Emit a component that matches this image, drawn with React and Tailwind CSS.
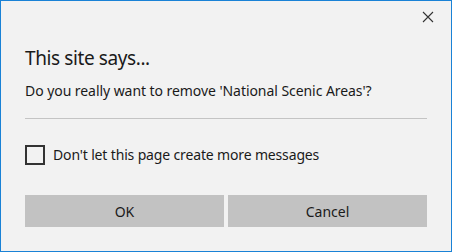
export default function App() {
  return (
    <div
      className="w-[452px] h-[252px] border border-[#1a82d6] bg-[#f2f2f2] flex flex-col text-[#1a1a1a]"
      style={{ fontFamily: '"Noto Sans", "Open Sans", sans-serif' }}
    >
      <div className="flex justify-end pt-[10px] pr-[17px]">
        <svg width="12" height="12" viewBox="0 0 12 12" className="text-[#333]">
          <path d="M1 1 L11 11 M11 1 L1 11" stroke="currentColor" strokeWidth="1.1" fill="none" />
        </svg>
      </div>
      <div className="px-[24px] flex flex-col">
        <div className="mt-[22px] text-[19px] leading-[26px] tracking-[-0.4px]">This site says...</div>
        <div className="mt-[10px] text-[14px] leading-[20px] tracking-[-0.06px]">Do you really want to remove 'National Scenic Areas'?</div>
        <div className="mt-[17px] h-px bg-[#c4c4c4]"></div>
        <label className="mt-[26px] flex items-center gap-[8px] text-[14px] leading-[20px]">
          <span className="w-[20px] h-[20px] border-2 border-[#333333] shrink-0"></span>
          <span className="tracking-[-0.15px]">Don't let this page create more messages</span>
        </label>
        <div className="mt-[30px] grid grid-cols-2 gap-[4px]">
          <button className="h-[32px] bg-[#c2c2c2] text-[14px]">OK</button>
          <button className="h-[32px] bg-[#c2c2c2] text-[14px]">Cancel</button>
        </div>
      </div>
    </div>
  );
}
